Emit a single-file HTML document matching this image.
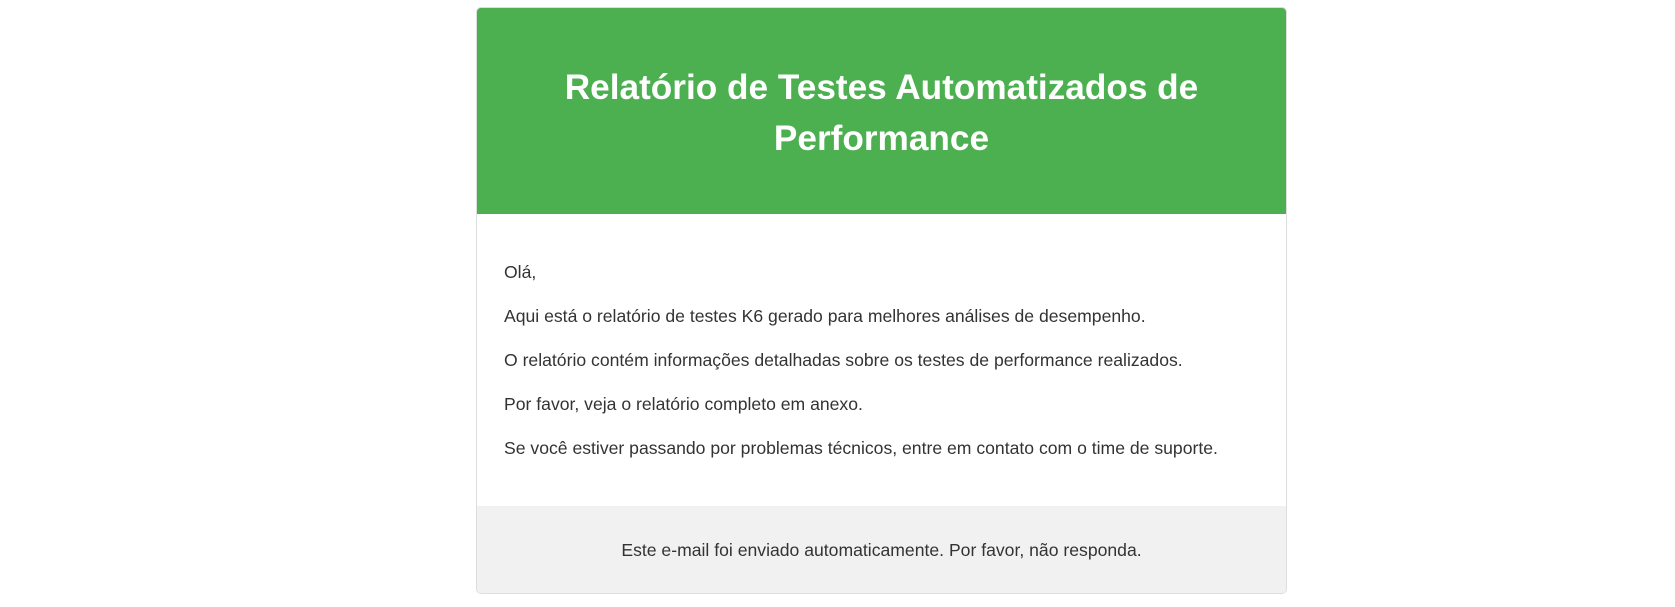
<!DOCTYPE html>
<html><head><meta charset="utf-8"><style>
body{margin:0;background:#fff;font-family:"Liberation Sans",Arial,sans-serif;width:1675px;height:607px;overflow:hidden;position:relative}
.c{position:absolute;left:476px;top:7px;width:809px;height:585px;border:1px solid #ddd;border-radius:5px;overflow:hidden;background:#fff}
.h{background:#4caf50;height:206px;color:#fff;text-align:center;display:flex;align-items:center;justify-content:center}
.h h1{margin:4px 0 0;font-size:35.2px;line-height:51px;font-weight:bold;padding:0 30px}
.b{height:292px;padding:0 27px;color:#333;font-size:17.6px}
.b p{margin:0;position:absolute;left:27px;line-height:20px}
.f{position:absolute;left:0;right:0;top:498px;bottom:0;background:#f1f1f1;text-align:center;color:#333;font-size:17.6px;line-height:88px}
</style></head><body>
<div class="c">
<div class="h"><h1>Relatório de Testes Automatizados de<br>Performance</h1></div>
<div class="b">
<p style="top:254px">Olá,</p>
<p style="top:298px">Aqui está o relatório de testes K6 gerado para melhores análises de desempenho.</p>
<p style="top:342px">O relatório contém informações detalhadas sobre os testes de performance realizados.</p>
<p style="top:386px">Por favor, veja o relatório completo em anexo.</p>
<p style="top:430px">Se você estiver passando por problemas técnicos, entre em contato com o time de suporte.</p>
</div>
<div class="f">Este e-mail foi enviado automaticamente. Por favor, não responda.</div>
</div>
</body></html>
